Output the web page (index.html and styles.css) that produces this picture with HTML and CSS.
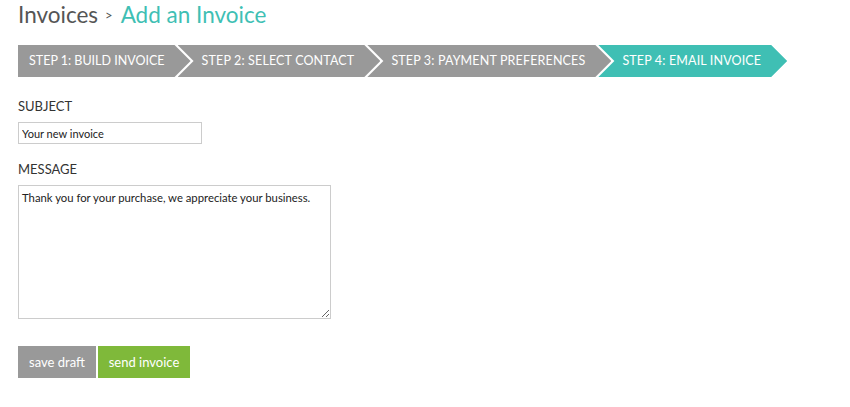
FILE: index.html
```html
<!DOCTYPE html>
<html>
<head>
<meta charset="utf-8">
<link rel="stylesheet" href="styles.css">
</head>
<body>
<div class="page">
  <h1 class="title"><span class="crumb">Invoices</span><span class="sep">&gt;</span><span class="current">Add an Invoice</span></h1>
  <div class="steps">
    <div class="step first">STEP 1: BUILD INVOICE</div>
    <div class="step">STEP 2: SELECT CONTACT</div>
    <div class="step">STEP 3: PAYMENT PREFERENCES</div>
    <div class="step active">STEP 4: EMAIL INVOICE</div>
  </div>
  <form class="form">
    <label class="label" for="subject">SUBJECT</label>
    <input class="input" id="subject" type="text" value="Your new invoice">
    <label class="label label-msg" for="message">MESSAGE</label>
    <textarea class="textarea" id="message">Thank you for your purchase, we appreciate your business.</textarea>
    <div class="actions">
      <button type="button" class="btn btn-draft">save draft</button>
      <button type="button" class="btn btn-send">send invoice</button>
    </div>
  </form>
</div>
</body>
</html>
```

FILE: styles.css
```css
html, body {
  margin: 0;
  padding: 0;
  background: #fff;
}
body {
  font-family: Lato, "Open Sans", sans-serif;
  color: #333;
}
.page {
  padding: 0 18px;
}
.title {
  margin: 0;
  padding-top: 1px;
  height: 44px;
  font-size: 22.5px;
  font-weight: 400;
  line-height: 28px;
  display: flex;
  align-items: baseline;
}
.crumb {
  color: #555;
}
.sep {
  color: #555;
  font-size: 13px;
  margin: 0 8px 0 7px;
  position: relative;
  top: -3px;
}
.current {
  color: #3fbfb4;
}
.steps {
  display: flex;
  height: 32px;
}
.step {
  height: 32px;
  line-height: 32px;
  background: #999;
  color: #fff;
  font-size: 12.5px;
  letter-spacing: 0.15px;
  padding: 0 26px 0 24px;
  margin-left: -13px;
  white-space: nowrap;
  clip-path: polygon(0 0, calc(100% - 16px) 0, 100% 50%, calc(100% - 16px) 100%, 0 100%, 16px 50%);
}
.step.first {
  margin-left: 0;
  padding-left: 11px;
  letter-spacing: 0;
  clip-path: polygon(0 0, calc(100% - 16px) 0, 100% 50%, calc(100% - 16px) 100%, 0 100%);
}
.step.active {
  background: #3fbfb4;
}
.form {
  display: flex;
  flex-direction: column;
  align-items: flex-start;
  padding-top: 21px;
}
.label {
  font-size: 13px;
  color: #333;
  line-height: 16px;
  margin-bottom: 8px;
}
.label-msg {
  margin-top: 17px;
}
.input {
  box-sizing: border-box;
  width: 184px;
  height: 22px;
  border: 1px solid #ccc;
  padding: 0 3px;
  font-family: Lato, sans-serif;
  font-size: 11px;
  color: #222;
  margin: 0;
}
.textarea {
  box-sizing: border-box;
  width: 313px;
  height: 134px;
  border: 1px solid #ccc;
  padding: 5px 3px;
  font-family: Lato, sans-serif;
  font-size: 11.3px;
  color: #222;
  margin: 0;
}
.actions {
  display: flex;
  gap: 2px;
  margin-top: 27px;
}
.btn {
  height: 32px;
  border: 0;
  color: #fff;
  font-family: Lato, sans-serif;
  font-size: 13px;
  padding: 0;
  white-space: nowrap;
  cursor: pointer;
}
.btn-draft {
  background: #999;
  width: 78px;
}
.btn-send {
  background: #7fb93a;
  width: 92px;
}
```
